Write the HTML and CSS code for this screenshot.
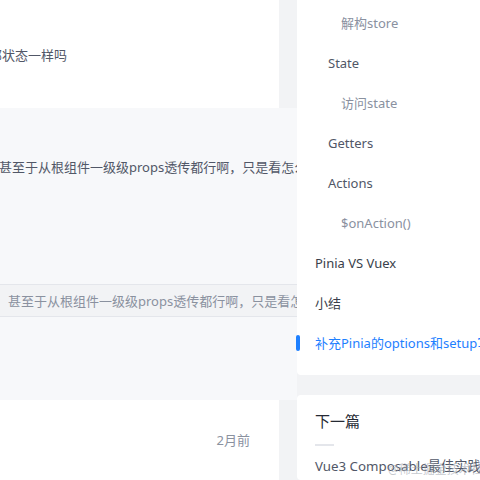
FILE: index.html
```html
<!DOCTYPE html>
<html lang="zh-CN">
<head>
<meta charset="utf-8">
<title>Pinia</title>
<link rel="stylesheet" href="styles.css">
</head>
<body>
<div class="page">
  <div class="main">
    <div class="article-tail">
      <p class="tail-text">与组件内部状态一样吗</p>
    </div>
    <div class="reply-block">
      <p class="reply-text">甚至于从根组件一级级props透传都行啊，只是看怎么维护</p>
      <div class="quote">
        <p class="quote-text">：甚至于从根组件一级级props透传都行啊，只是看怎么维护</p>
      </div>
    </div>
    <div class="comment-foot">
      <span class="time">2月前</span>
    </div>
  </div>
  <div class="side">
    <div class="card catalog">
      <div class="item lv3">解构store</div>
      <div class="item lv2 dark">State</div>
      <div class="item lv3">访问state</div>
      <div class="item lv2 dark">Getters</div>
      <div class="item lv2 dark">Actions</div>
      <div class="item lv3">$onAction()</div>
      <div class="item lv1 darker">Pinia VS Vuex</div>
      <div class="item lv1 darker">小结</div>
      <div class="item lv1 active">补充Pinia的options和setup写法</div>
    </div>
    <div class="card next">
      <div class="next-title">下一篇</div>
      <div class="next-rule"></div>
      <div class="next-link">Vue3 Composable最佳实践</div>
    </div>
  </div>
</div>
<div class="watermark">@稀土掘金技术社区</div>
</body>
</html>
```
FILE: styles.css
```css
html, body {
  margin: 0;
  padding: 0;
  width: 480px;
  height: 480px;
  overflow: hidden;
  background: #f2f3f5;
  font-family: "Noto Sans", "Noto Sans CJK SC", sans-serif;
}
p { margin: 0; }

.page {
  display: flex;
  width: 700px;
  height: 480px;
}

.main {
  width: 297px;
  flex: none;
  display: flex;
  flex-direction: column;
}

.article-tail {
  width: 279px;
  height: 108px;
  background: #fff;
  overflow: hidden;
  padding-top: 45px;
  box-sizing: border-box;
}
.tail-text {
  font-size: 13px;
  line-height: 20px;
  color: #515767;
  white-space: nowrap;
  margin-left: -63px;
}

.reply-block {
  height: 292px;
  background: #f7f8fa;
  overflow: hidden;
  padding-top: 49px;
  box-sizing: border-box;
}
.reply-text {
  font-size: 13px;
  line-height: 20px;
  color: #515767;
  white-space: nowrap;
  margin-left: -1px;
}
.quote {
  margin-top: 107px;
  height: 33px;
  box-sizing: border-box;
  background: #f2f3f5;
  border-top: 1px solid #e4e6eb;
  border-bottom: 1px solid #e4e6eb;
  display: flex;
  align-items: center;
  overflow: hidden;
}
.quote-text {
  font-size: 13px;
  line-height: 20px;
  color: #8a919f;
  white-space: nowrap;
  margin-left: -5px;
}

.comment-foot {
  width: 279px;
  height: 80px;
  background: #fff;
  display: flex;
  justify-content: flex-end;
  padding: 30px 29px 0 0;
  box-sizing: border-box;
}
.time {
  font-size: 13px;
  line-height: 20px;
  color: #8a919f;
}

.side {
  width: 300px;
  flex: none;
  display: flex;
  flex-direction: column;
  gap: 20px;
}
.card {
  background: #fff;
  border-radius: 4px;
}
.catalog {
  border-radius: 0 0 4px 4px;
  padding: 3px 0 12px;
}
.item {
  position: relative;
  height: 40px;
  line-height: 40px;
  font-size: 13px;
  white-space: nowrap;
  color: #8a919f;
}
.lv1 { padding-left: 18px; }
.lv2 { padding-left: 31px; }
.lv3 { padding-left: 44px; }
.dark { color: #515767; }
.darker { color: #3a3f4b; }
.active { color: #1e80ff; }
.active::before {
  content: "";
  position: absolute;
  left: -1px;
  top: 12px;
  width: 4px;
  height: 16px;
  border-radius: 2px;
  background: #1e80ff;
}

.next {
  flex: 1;
  padding: 12px 18px 0;
}
.next-title {
  font-size: 15px;
  line-height: 28px;
  color: #252933;
}
.next-rule {
  width: 19px;
  height: 2px;
  background: #e4e6eb;
  margin-top: 9px;
}
.next-link {
  margin-top: 10px;
  font-size: 13.3px;
  line-height: 20px;
  color: #515767;
  white-space: nowrap;
}

.watermark {
  position: absolute;
  left: 388px;
  top: 462px;
  font-size: 12px;
  line-height: 16px;
  color: rgba(160, 165, 175, 0.6);
  white-space: nowrap;
}
```
